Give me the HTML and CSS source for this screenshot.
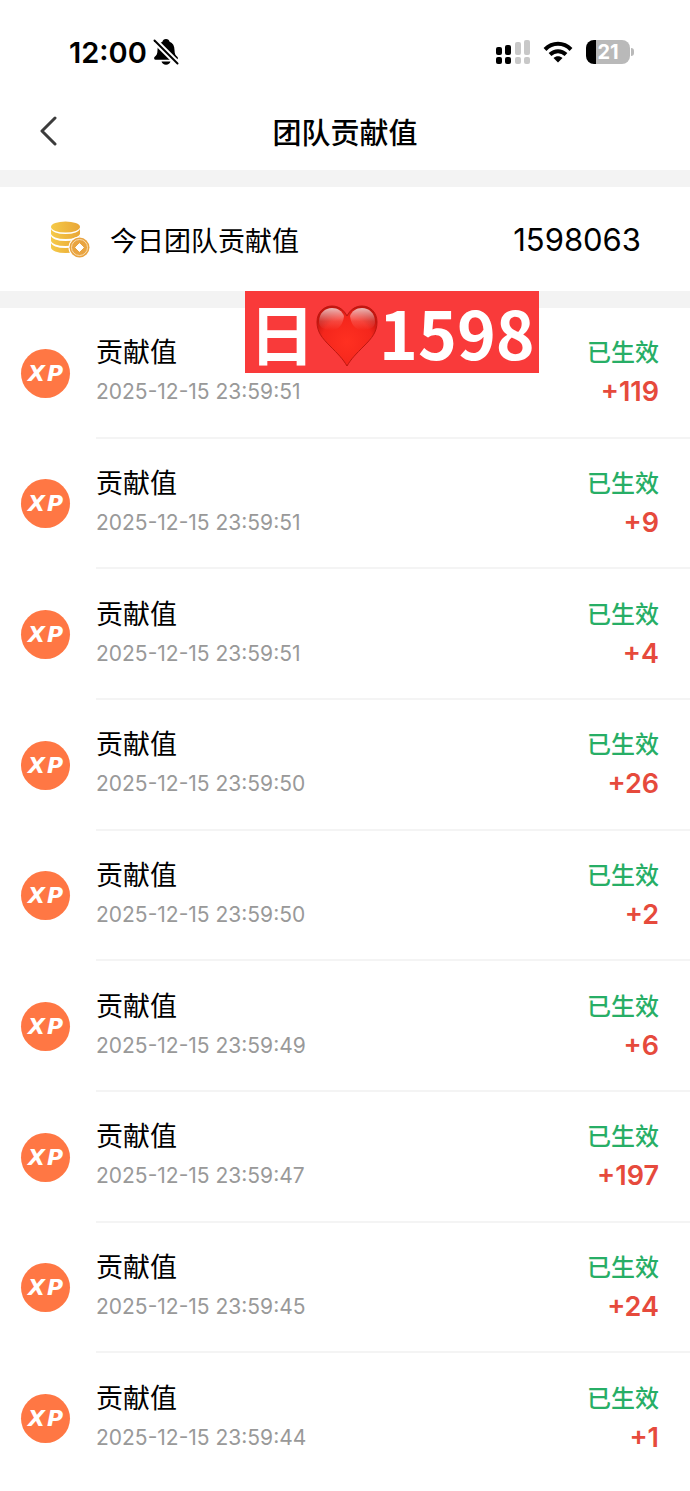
FILE: index.html
```html
<!DOCTYPE html>
<html lang="zh-CN">
<head>
    <meta charset="UTF-8">
    <meta name="viewport" content="width=device-width, initial-scale=1.0">
    <title>团队贡献值</title>
    <link rel="stylesheet" href="styles.css">
</head>
<body>

    <div class="status-bar">
        <div class="status-left">
            <span class="time">12:00</span>
            <svg class="bell" viewBox="0 0 26 26">
                <path d="M13 0c-2 0-3.300 1.200-3.600 2.800C6 4 4.500 7 4.500 11c0 4-1 5.500-3 7-.8.800-.3 2.700 1 2.700h21c1.300 0 1.800-1.900 1-2.700-2-1.500-3-3-3-7 0-4-1.500-7-4.900-8.200C16.300 1.200 15 0 13 0z"/>
                <path d="M8.500 22.500h9c-.4 2-2.200 3.200-4.500 3.200s-4.100-1.200-4.500-3.200z"/>
                <path d="M1 1l24 24" stroke="#fff" stroke-width="6"/>
                <path d="M1.500 1.500l23 23" stroke="#000" stroke-width="2" stroke-linecap="round"/>
            </svg>
        </div>
        <div class="status-right">
            <svg class="signal" viewBox="0 0 34 24">
                <rect x="0" y="7" width="6" height="8" rx="2"/>
                <rect x="9" y="5" width="6" height="10" rx="2"/>
                <rect x="0" y="17" width="6" height="7" rx="2"/>
                <rect x="9" y="17" width="6" height="7" rx="2"/>
                <g fill="#c8c8c8">
                    <rect x="19" y="2" width="6" height="13" rx="2"/>
                    <rect x="28" y="0" width="6" height="15" rx="2"/>
                    <rect x="19" y="17" width="6" height="7" rx="2"/>
                    <rect x="28" y="17" width="6" height="7" rx="2"/>
                </g>
            </svg>
            <svg class="wifi" viewBox="0 0 30 22">
                <path d="M2 8.500C9.500.9 20.500.9 28 8.500" fill="none" stroke="#000" stroke-width="4"/>
                <path d="M7 13.500c4.800-4.500 11.200-4.500 16 0" fill="none" stroke="#000" stroke-width="4"/>
                <path d="M10.500 17c2.700-2.500 6.300-2.500 9 0L15 21.500z"/>
            </svg>
            <div class="battery"><span class="battery-level">21</span></div>
        </div>
    </div>

    <header class="nav">
        <a class="back" href="#" aria-label="返回">
            <svg viewBox="0 0 18 30">
                <path d="M16 2L3 15l13 13" fill="none" stroke="#3c3c3c" stroke-width="3" stroke-linecap="round" stroke-linejoin="round"/>
            </svg>
        </a>
        <h1>团队贡献值</h1>
    </header>

    <section class="summary">
        <svg class="coins" viewBox="0 0 40 38">
            <defs>
                <linearGradient id="gold" x1="0" y1="0" x2="1" y2="0">
                    <stop offset="0" stop-color="#f5ca48"/>
                    <stop offset="1" stop-color="#e9a636"/>
                </linearGradient>
            </defs>
            <g fill="url(#gold)">
                <path d="M1 22.500a14.500 5.500 0 0 0 29 0v5a14.500 5.500 0 0 1-29 0z"/>
                <path d="M1 15.500a14.500 5.500 0 0 0 29 0v5a14.500 5.500 0 0 1-29 0z"/>
                <path d="M1 8.500a14.500 5.500 0 0 0 29 0v5a14.500 5.500 0 0 1-29 0z"/>
                <ellipse cx="15.500" cy="7" rx="14.500" ry="5.500"/>
            </g>
            <circle cx="29.500" cy="27.500" r="11" fill="#fff"/>
            <circle cx="29.500" cy="27.500" r="10" fill="#e9a441"/>
            <circle cx="29.500" cy="27.500" r="8" fill="none" stroke="#f9dcae" stroke-width="1"/>
            <path d="M29.500 23.500l4 4-4 4-4-4z" fill="#fff" stroke="#fff" stroke-width="1" stroke-linejoin="round"/>
        </svg>
        <h2>今日团队贡献值</h2>
        <span class="total">1598063</span>
    </section>

    <main class="records">
        <div class="banner">
            <span>日</span>
            <svg class="heart" viewBox="0 0 62 62">
                <defs>
                    <radialGradient id="heartFill" cx="0.5" cy="0.6" r="0.6">
                        <stop offset="0" stop-color="#ff3021"/>
                        <stop offset="0.7" stop-color="#f4261c"/>
                        <stop offset="1" stop-color="#c4140e"/>
                    </radialGradient>
                    <linearGradient id="heartShine" x1="0" y1="0" x2="0" y2="1">
                        <stop offset="0" stop-color="#fff" stop-opacity="0.7"/>
                        <stop offset="0.6" stop-color="#fff" stop-opacity="0.15"/>
                        <stop offset="1" stop-color="#fff" stop-opacity="0"/>
                    </linearGradient>
                </defs>
                <path d="M31 61C27 54 22 49 14 41 6 33 1 27 1 17 1 7 8 1 16 1c7 0 12 4 15 10C34 5 39 1 46 1c8 0 15 6 15 16 0 10-5 16-13 24-8 8-13 13-17 20z" fill="url(#heartFill)" stroke="#bd1710" stroke-width="1"/>
                <path d="M3 17C3 8 9 3 16 3c6 0 10 3 12 8-1 8-5 14-12 14S3 23 3 17z" fill="url(#heartShine)"/>
                <path d="M59 17C59 8 53 3 46 3c-6 0-10 3-12 8 1 8 5 14 12 14s13-2 13-8z" fill="url(#heartShine)"/>
            </svg>
            <span>1598</span>
        </div>

        <ul class="list" id="list"></ul>
    </main>

    <script src="script.js"></script>
</body>
</html>
```

FILE: styles.css
```css
* {
    box-sizing: border-box;
}
body {
    display: flex;
    flex-direction: column;
    min-height: 100vh;
    margin: 0;
    background-color: #fff;
    color: #000;
    font-family: Inter, "Noto Sans CJK SC", sans-serif;
}
h1, h2, h3, p, ul {
    margin: 0;
    padding: 0;
}
svg {
    display: block;
}

/* status bar */
.status-bar {
    display: flex;
    justify-content: space-between;
    align-items: center;
    height: 94px;
    padding: 10px 60px 0 69px;
}
.status-left, .status-right {
    display: flex;
    align-items: center;
}
.status-left {
    gap: 6px;
}
.status-right {
    gap: 13px;
}
.time {
    font-size: 29px;
    font-weight: 600;
}
.bell {
    width: 26px;
    height: 26px;
}
.signal {
    width: 34px;
    height: 24px;
}
.wifi {
    width: 30px;
    height: 22px;
}
.battery {
    position: relative;
    width: 44px;
    height: 24px;
    border-radius: 8px;
    background: linear-gradient(to right, #000 10px, #b9b9b9 10px);
    color: #fff;
    font-size: 20px;
    font-weight: 700;
    line-height: 24px;
    text-align: center;
}
.battery::after {
    content: "";
    position: absolute;
    top: 8px;
    right: -4px;
    width: 3px;
    height: 8px;
    border-radius: 0 3px 3px 0;
    background-color: #b9b9b9;
}

/* title */
.nav {
    display: grid;
    grid-template-columns: 60px 1fr 60px;
    align-items: center;
    height: 76px;
    padding-bottom: 2px;
}
.back {
    padding-left: 39px;
}
.back svg {
    width: 18px;
    height: 30px;
}
h1 {
    font-size: 29px;
    font-weight: 500;
    text-align: center;
}

/* today total */
.summary {
    display: flex;
    align-items: center;
    height: 138px;
    padding: 0 49px 0 50px;
    border: solid #f3f3f3;
    border-width: 17px 0;
}
.coins {
    width: 40px;
    height: 38px;
}
h2 {
    flex: 1;
    margin-left: 20px;
    font-size: 27px;
    font-weight: 400;
}
.total {
    font-size: 31px;
}

/* records */
.records {
    position: relative;
    display: flex;
    flex: 1;
    padding-bottom: 7px;
}
.list {
    display: grid;
    flex: 1;
    grid-auto-rows: 1fr;
    list-style: none;
}
.item {
    display: flex;
    align-items: center;
    gap: 26px;
    padding-left: 21px;
}
.badge {
    display: flex;
    justify-content: center;
    gap: 2px;
    width: 49px;
    height: 49px;
    border-radius: 50%;
    background-color: #ff7744;
    color: #fff;
    font-family: "DejaVu Sans", sans-serif;
    font-size: 22px;
    font-style: italic;
    font-weight: 700;
    line-height: 50px;
}
.item-body {
    display: flex;
    flex: 1;
    align-self: stretch;
    justify-content: space-between;
    align-items: center;
    padding-right: 31px;
    border-bottom: 2px solid #f4f4f4;
}
.item:last-child .item-body {
    border-color: transparent;
}
h3 {
    font-size: 27px;
    font-weight: 400;
    line-height: 40px;
}
.date {
    color: #999;
    font-size: 21px;
    line-height: 38px;
}
.item-right {
    text-align: right;
}
.state {
    color: #27ae66;
    font-size: 24px;
    font-weight: 500;
    line-height: 40px;
}
.amount {
    color: #e64a3c;
    font-size: 27px;
    font-weight: 600;
    line-height: 38px;
}

.banner {
    position: absolute;
    top: -17px;
    left: 245px;
    display: flex;
    align-items: center;
    height: 82px;
    padding: 0 4px;
    background-color: #f93a3a;
    color: #fff;
    font-family: "Noto Sans CJK SC", sans-serif;
    font-size: 66px;
    font-weight: 700;
    line-height: 80px;
}
.banner span {
    height: 82px;
}
.heart {
    width: 62px;
    height: 62px;
    margin: 8px 1px 0;
}
```

FILE: script.js
```javascript
const records = [
    { date: '2025-12-15 23:59:51', amount: 119 },
    { date: '2025-12-15 23:59:51', amount: 9 },
    { date: '2025-12-15 23:59:51', amount: 4 },
    { date: '2025-12-15 23:59:50', amount: 26 },
    { date: '2025-12-15 23:59:50', amount: 2 },
    { date: '2025-12-15 23:59:49', amount: 6 },
    { date: '2025-12-15 23:59:47', amount: 197 },
    { date: '2025-12-15 23:59:45', amount: 24 },
    { date: '2025-12-15 23:59:44', amount: 1 }
];

document.getElementById('list').innerHTML = records.map(record => `
    <li class="item">
        <div class="badge"><span>X</span><span>P</span></div>
        <div class="item-body">
            <div>
                <h3>贡献值</h3>
                <p class="date">${record.date}</p>
            </div>
            <div class="item-right">
                <p class="state">已生效</p>
                <p class="amount">+${record.amount}</p>
            </div>
        </div>
    </li>
`).join('');
```
